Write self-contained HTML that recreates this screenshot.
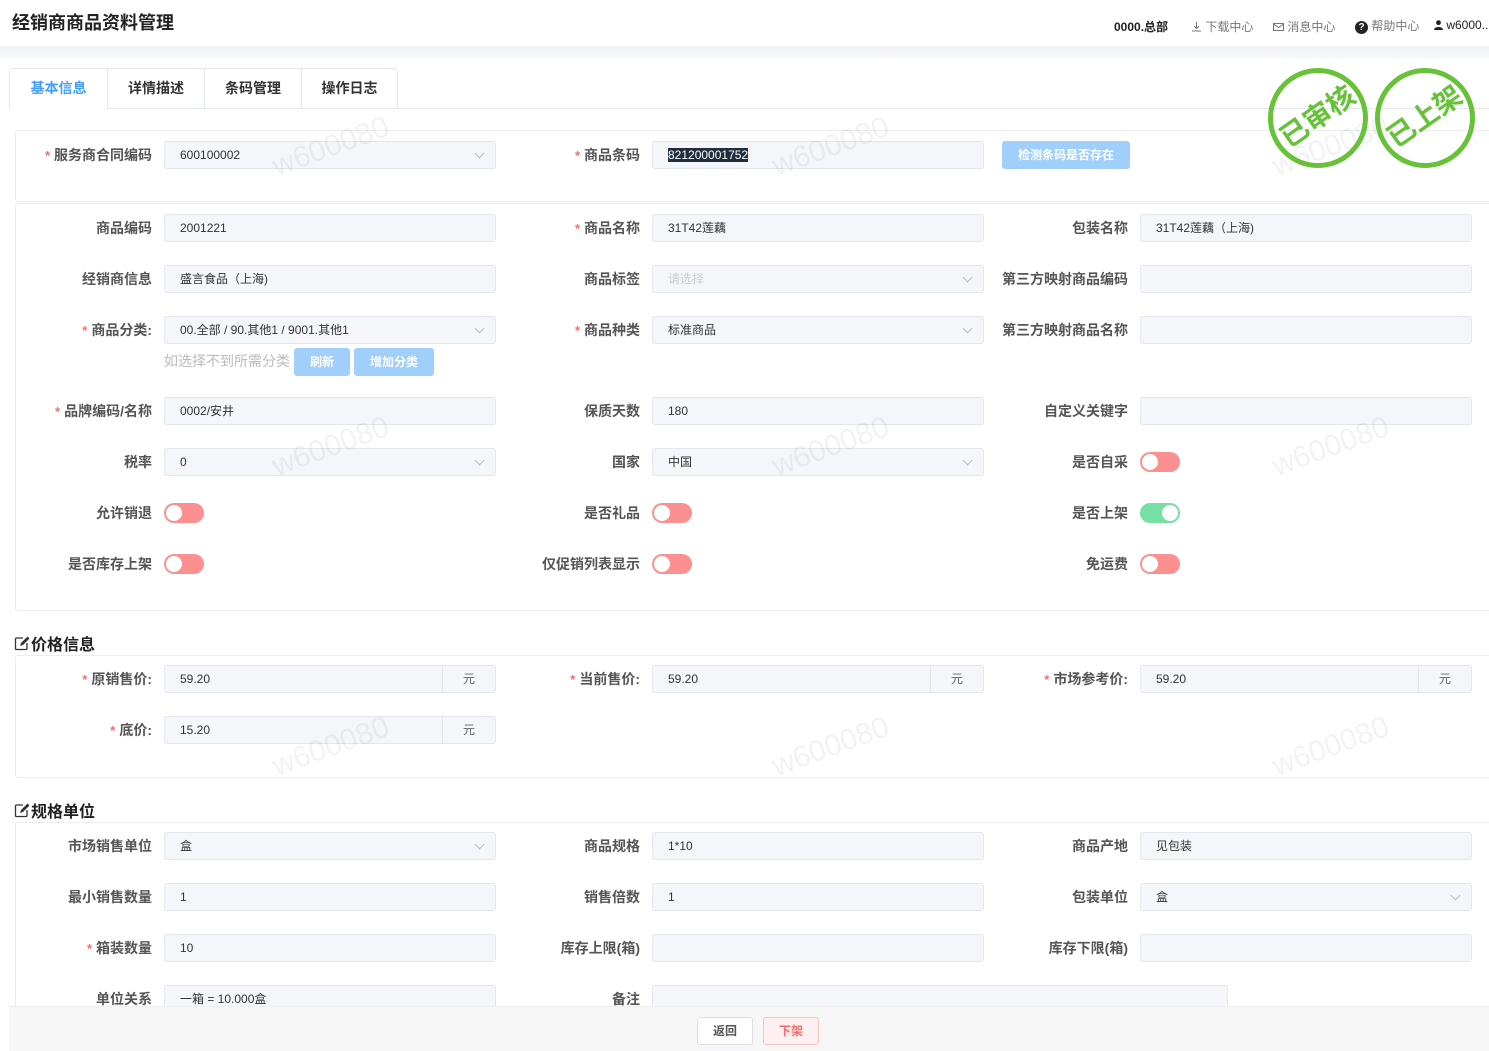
<!DOCTYPE html>
<html><head><meta charset="utf-8">
<style>
*{margin:0;padding:0;box-sizing:border-box}
body{width:1489px;height:1051px;position:relative;overflow:hidden;background:#fff;font-family:"Liberation Sans","Noto Sans CJK SC",sans-serif;color:#333}
.a{position:absolute;white-space:nowrap}
.lbl{position:absolute;font-size:14px;font-weight:bold;color:#555;text-align:right;white-space:nowrap;line-height:28px}
.lbl i{font-style:normal;color:#f56c6c;margin-right:4px;font-size:13px}
.inp{position:absolute;height:28px;background:#f5f6fa;border:1px solid #e4e6ee;border-radius:3px;font-size:12px;color:#333;line-height:26px;padding-left:15px;white-space:nowrap}
.arr{position:absolute;right:12px;top:8px;width:7px;height:7px;border-right:1px solid #bbb;border-bottom:1px solid #bbb;transform:rotate(45deg)}
.unit{position:absolute;right:0;top:0;width:53px;height:26px;border-left:1px solid #e4e6ee;text-align:center;color:#666}
.box{position:absolute;left:15px;right:0;border:1px solid #ebedf2;border-right:none;border-radius:3px 0 0 3px}
.sw{position:absolute;width:40px;height:20px;border-radius:10px;background:#fc8f8f}
.sw::after{content:"";position:absolute;left:2px;top:2px;width:16px;height:16px;border-radius:50%;background:#fff}
.sw.on{background:#75e0a3}.sw.on::after{left:22px}
.wm{position:absolute;font-size:30px;color:rgba(0,0,0,.05);transform:rotate(-20deg);white-space:nowrap}
.btn{position:absolute;background:#a0cffc;color:#fff;font-size:12px;font-weight:bold;text-align:center;border-radius:3px}
.sec{position:absolute;left:14px;font-size:16px;font-weight:bold;color:#222;white-space:nowrap}
.sec svg{vertical-align:-1px;margin-right:1px}
.stamp{position:absolute;width:100px;height:100px;border:5px solid #67c23a;border-radius:50%;color:#67c23a;font-weight:bold;font-size:28px;text-align:center;line-height:88px}
.stamp span{display:inline-block;transform:rotate(-35deg)}
</style></head><body>
<div class="a" style="left:12px;top:9px;font-size:18px;font-weight:bold;color:#222">经销商商品资料管理</div>
<div class="a" style="left:1114px;top:18px;font-size:12px;font-weight:bold;color:#222">0000.总部</div>
<div class="a" style="left:1191px;top:18px;font-size:12px;color:#777"><svg width="11" height="11" viewBox="0 0 11 11" style="vertical-align:-1px"><path d="M5.5 1v6M3 5l2.5 2.5L8 5M1 10h9" stroke="#777" fill="none"/></svg> 下载中心</div>
<div class="a" style="left:1273px;top:18px;font-size:12px;color:#777"><svg width="11" height="10" viewBox="0 0 11 10" style="vertical-align:-1px"><rect x=".5" y="1.5" width="10" height="7" stroke="#777" fill="none"/><path d="M.5 2l5 3.5 5-3.5" stroke="#777" fill="none"/></svg> 消息中心</div>
<div class="a" style="left:1355px;top:17px;font-size:12px;color:#777"><span style="display:inline-block;width:13px;height:13px;border-radius:50%;background:#222;color:#fff;font-size:10px;font-weight:bold;text-align:center;line-height:13px">?</span> 帮助中心</div>
<div class="a" style="left:1434px;top:18px;font-size:12px;color:#222"><svg width="9" height="10" viewBox="0 0 9 10" style="vertical-align:-1px"><circle cx="4.5" cy="2.7" r="2.4" fill="#222"/><path d="M0 10c0-4 9-4 9 0z" fill="#222"/></svg> w6000...</div>
<div class="a" style="left:0;top:46px;width:1489px;height:12px;background:linear-gradient(#f0f1f3,#f7f8f9)"></div>
<!-- tabs -->
<div class="a" style="left:106px;top:108px;right:0;height:1px;background:#e4e7ed"></div>
<div class="a" style="left:9px;top:68px;width:389px;height:41px;border:1px solid #e4e7ed;border-bottom:none;border-radius:3px 3px 0 0;font-size:14px;font-weight:bold;color:#333">
<div class="a" style="left:0;top:0;width:97px;height:41px;line-height:39px;text-align:center;color:#409eff;background:#fff">基本信息</div>
<div class="a" style="left:97px;top:0;width:97px;height:40px;line-height:39px;text-align:center;border-left:1px solid #e4e7ed;border-bottom:1px solid #e4e7ed">详情描述</div>
<div class="a" style="left:194px;top:0;width:97px;height:40px;line-height:39px;text-align:center;border-left:1px solid #e4e7ed;border-bottom:1px solid #e4e7ed">条码管理</div>
<div class="a" style="left:291px;top:0;width:96px;height:40px;line-height:39px;text-align:center;border-left:1px solid #e4e7ed;border-bottom:1px solid #e4e7ed">操作日志</div>
</div>
<!-- boxes -->
<div class="box" style="top:130px;height:72px"></div>
<div class="box" style="top:203px;height:408px"></div>
<div class="box" style="top:655px;height:123px"></div>
<div class="box" style="top:822px;height:200px"></div>
<div class="sec" style="top:631px"><svg width="16" height="15" viewBox="0 0 16 15"><path d="M9 2H2.5A1 1 0 0 0 1.5 3v9.5a1 1 0 0 0 1 1H12a1 1 0 0 0 1-1V7" stroke="#333" stroke-width="1.3" fill="none"/><path d="M6 10l1-3 6.5-6.5 2 2L9 9z" fill="#333"/></svg>价格信息</div>
<div class="sec" style="top:798px"><svg width="16" height="15" viewBox="0 0 16 15"><path d="M9 2H2.5A1 1 0 0 0 1.5 3v9.5a1 1 0 0 0 1 1H12a1 1 0 0 0 1-1V7" stroke="#333" stroke-width="1.3" fill="none"/><path d="M6 10l1-3 6.5-6.5 2 2L9 9z" fill="#333"/></svg>规格单位</div>

<!-- row 1 -->
<div class="lbl" style="right:1337px;top:141px"><i>*</i>服务商合同编码</div>
<div class="inp" style="left:164px;top:141px;width:332px">600100002<span class="arr"></span></div>
<div class="lbl" style="right:849px;top:141px"><i>*</i>商品条码</div>
<div class="inp" style="left:652px;top:141px;width:332px"><span style="background:#1f2d3d;color:#fff">821200001752</span></div>
<div class="btn" style="left:1002px;top:141px;width:128px;height:28px;line-height:28px">检测条码是否存在</div>

<div class="lbl" style="right:1337px;top:214px">商品编码</div>
<div class="inp" style="left:164px;top:214px;width:332px">2001221</div>
<div class="lbl" style="right:849px;top:214px"><i>*</i>商品名称</div>
<div class="inp" style="left:652px;top:214px;width:332px">31T42莲藕</div>
<div class="lbl" style="right:361px;top:214px">包装名称</div>
<div class="inp" style="left:1140px;top:214px;width:332px">31T42莲藕（上海)</div>

<div class="lbl" style="right:1337px;top:265px">经销商信息</div>
<div class="inp" style="left:164px;top:265px;width:332px">盛言食品（上海)</div>
<div class="lbl" style="right:849px;top:265px">商品标签</div>
<div class="inp" style="left:652px;top:265px;width:332px;color:#ccc">请选择<span class="arr"></span></div>
<div class="lbl" style="right:361px;top:265px">第三方映射商品编码</div>
<div class="inp" style="left:1140px;top:265px;width:332px"></div>

<div class="lbl" style="right:1337px;top:316px"><i>*</i>商品分类:</div>
<div class="inp" style="left:164px;top:316px;width:332px">00.全部 / 90.其他1 / 9001.其他1<span class="arr"></span></div>
<div class="lbl" style="right:849px;top:316px"><i>*</i>商品种类</div>
<div class="inp" style="left:652px;top:316px;width:332px">标准商品<span class="arr"></span></div>
<div class="lbl" style="right:361px;top:316px">第三方映射商品名称</div>
<div class="inp" style="left:1140px;top:316px;width:332px"></div>
<div class="a" style="left:164px;top:351px;font-size:14px;color:#bbb">如选择不到所需分类</div>
<div class="btn" style="left:294px;top:348px;width:56px;height:28px;line-height:28px">刷新</div>
<div class="btn" style="left:354px;top:348px;width:80px;height:28px;line-height:28px">增加分类</div>

<div class="lbl" style="right:1337px;top:397px"><i>*</i>品牌编码/名称</div>
<div class="inp" style="left:164px;top:397px;width:332px">0002/安井</div>
<div class="lbl" style="right:849px;top:397px">保质天数</div>
<div class="inp" style="left:652px;top:397px;width:332px">180</div>
<div class="lbl" style="right:361px;top:397px">自定义关键字</div>
<div class="inp" style="left:1140px;top:397px;width:332px"></div>

<div class="lbl" style="right:1337px;top:448px">税率</div>
<div class="inp" style="left:164px;top:448px;width:332px">0<span class="arr"></span></div>
<div class="lbl" style="right:849px;top:448px">国家</div>
<div class="inp" style="left:652px;top:448px;width:332px">中国<span class="arr"></span></div>
<div class="lbl" style="right:361px;top:448px">是否自采</div>
<div class="sw" style="left:1140px;top:452px"></div>

<div class="lbl" style="right:1337px;top:499px">允许销退</div>
<div class="sw" style="left:164px;top:503px"></div>
<div class="lbl" style="right:849px;top:499px">是否礼品</div>
<div class="sw" style="left:652px;top:503px"></div>
<div class="lbl" style="right:361px;top:499px">是否上架</div>
<div class="sw on" style="left:1140px;top:503px"></div>

<div class="lbl" style="right:1337px;top:550px">是否库存上架</div>
<div class="sw" style="left:164px;top:554px"></div>
<div class="lbl" style="right:849px;top:550px">仅促销列表显示</div>
<div class="sw" style="left:652px;top:554px"></div>
<div class="lbl" style="right:361px;top:550px">免运费</div>
<div class="sw" style="left:1140px;top:554px"></div>

<!-- price -->
<div class="lbl" style="right:1337px;top:665px"><i>*</i>原销售价:</div>
<div class="inp" style="left:164px;top:665px;width:332px">59.20<span class="unit">元</span></div>
<div class="lbl" style="right:849px;top:665px"><i>*</i>当前售价:</div>
<div class="inp" style="left:652px;top:665px;width:332px">59.20<span class="unit">元</span></div>
<div class="lbl" style="right:361px;top:665px"><i>*</i>市场参考价:</div>
<div class="inp" style="left:1140px;top:665px;width:332px">59.20<span class="unit">元</span></div>
<div class="lbl" style="right:1337px;top:716px"><i>*</i>底价:</div>
<div class="inp" style="left:164px;top:716px;width:332px">15.20<span class="unit">元</span></div>

<!-- spec -->
<div class="lbl" style="right:1337px;top:832px">市场销售单位</div>
<div class="inp" style="left:164px;top:832px;width:332px">盒<span class="arr"></span></div>
<div class="lbl" style="right:849px;top:832px">商品规格</div>
<div class="inp" style="left:652px;top:832px;width:332px">1*10</div>
<div class="lbl" style="right:361px;top:832px">商品产地</div>
<div class="inp" style="left:1140px;top:832px;width:332px">见包装</div>

<div class="lbl" style="right:1337px;top:883px">最小销售数量</div>
<div class="inp" style="left:164px;top:883px;width:332px">1</div>
<div class="lbl" style="right:849px;top:883px">销售倍数</div>
<div class="inp" style="left:652px;top:883px;width:332px">1</div>
<div class="lbl" style="right:361px;top:883px">包装单位</div>
<div class="inp" style="left:1140px;top:883px;width:332px">盒<span class="arr"></span></div>

<div class="lbl" style="right:1337px;top:934px"><i>*</i>箱装数量</div>
<div class="inp" style="left:164px;top:934px;width:332px">10</div>
<div class="lbl" style="right:849px;top:934px">库存上限(箱)</div>
<div class="inp" style="left:652px;top:934px;width:332px"></div>
<div class="lbl" style="right:361px;top:934px">库存下限(箱)</div>
<div class="inp" style="left:1140px;top:934px;width:332px"></div>

<div class="lbl" style="right:1337px;top:985px">单位关系</div>
<div class="inp" style="left:164px;top:985px;width:332px">一箱 = 10.000盒</div>
<div class="lbl" style="right:849px;top:985px">备注</div>
<div class="inp" style="left:652px;top:985px;width:576px;height:40px"></div>

<!-- watermarks -->
<div class="wm" style="left:270px;top:130px">w600080</div>
<div class="wm" style="left:770px;top:130px">w600080</div>
<div class="wm" style="left:1270px;top:130px">w600080</div>
<div class="wm" style="left:270px;top:430px">w600080</div>
<div class="wm" style="left:770px;top:430px">w600080</div>
<div class="wm" style="left:1270px;top:430px">w600080</div>
<div class="wm" style="left:270px;top:730px">w600080</div>
<div class="wm" style="left:770px;top:730px">w600080</div>
<div class="wm" style="left:1270px;top:730px">w600080</div>

<!-- stamps -->
<div class="stamp" style="left:1268px;top:68px"><span>已审核</span></div>
<div class="stamp" style="left:1375px;top:68px"><span>已上架</span></div>

<!-- footer -->
<div class="a" style="left:9px;top:1006px;width:1480px;height:45px;background:#f7f7f7;border-top:1px solid #eee"></div>
<div class="a" style="left:697px;top:1017px;width:56px;height:28px;background:#fff;border:1px solid #dcdfe6;border-radius:3px;font-size:12px;font-weight:bold;color:#555;text-align:center;line-height:26px">返回</div>
<div class="a" style="left:763px;top:1017px;width:56px;height:28px;background:#fef0f0;border:1px solid #fbc4c4;border-radius:3px;font-size:12px;font-weight:bold;color:#f56c6c;text-align:center;line-height:26px">下架</div>
</body></html>
